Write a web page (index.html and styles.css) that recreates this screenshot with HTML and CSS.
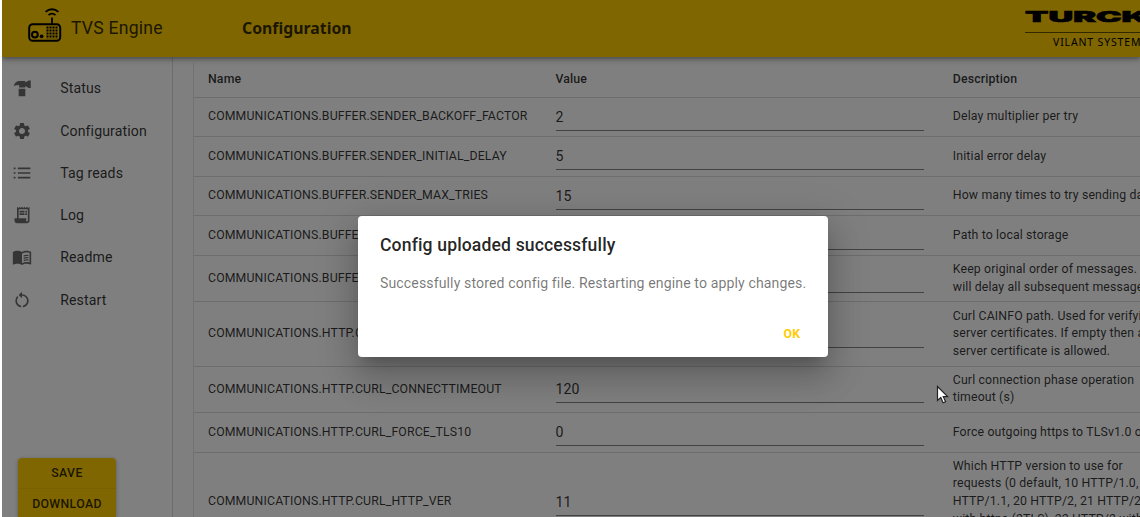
FILE: index.html
```html
<!DOCTYPE html>
<html lang="en">
<head>
<meta charset="utf-8">
<title>TVS Engine</title>
<link rel="stylesheet" href="styles.css">
</head>
<body>
<div class="app">
  <header class="appbar">
    <svg class="logo" width="34" height="34" viewBox="0 0 34 34" fill="none" stroke="#000" stroke-width="2">
      <rect x="1.2" y="16.2" width="31" height="16.600" rx="3.500"/>
      <path d="M24 16V9.500" stroke-width="1.800"/>
      <path d="M20.500 7.200a5 5 0 0 1 7 0" stroke-width="1.800"/>
      <path d="M17.600 3.800a9.300 9.300 0 0 1 12.800 0" stroke-width="1.800"/>
      <circle cx="6.900" cy="26.600" r="2.900"/>
      <circle cx="13.600" cy="28.300" r="1.900" fill="#000" stroke="none"/>
      <path d="M19.500 18.500v12.200M22.500 18.500v12.200M25.500 18.500v12.200M28.500 18.500v12.200" stroke-width="2" stroke-dasharray="2.100 .9"/>
    </svg>
    <span class="brand">TVS Engine</span>
    <h1 class="page-title">Configuration</h1>
    <div class="vendor">
      <div class="vendor-name"><span>TURCK</span></div>
      <div class="vendor-unit">VILANT SYSTEMS</div>
    </div>
  </header>
  <div class="body">
    <aside class="sidebar">
      <nav class="menu">
        <a class="item"><svg class="icon" viewBox="0 0 24 24"><path d="M2 9.500C3 5.500 6 3.500 9 3.500h7v2l4-2.500h2.500v9H20l-4-2.500v2H8.500V8.500C6 8.500 4 9 2 9.500zM8 13h8v9H8z"/></svg>Status</a>
        <a class="item"><svg class="icon" viewBox="0 0 24 24"><path d="M19.140 12.940c.04-.3.060-.61.060-.94 0-.32-.020-.64-.070-.94l2.030-1.580a.49.49 0 0 0 .12-.61l-1.920-3.320a.488.488 0 0 0-.59-.22l-2.390.96c-.5-.38-1.030-.7-1.620-.94l-.36-2.540a.484.484 0 0 0-.48-.41h-3.840c-.24 0-.43.17-.47.41l-.36 2.540c-.59.24-1.130.57-1.620.94l-2.390-.96c-.22-.08-.47 0-.59.22L2.740 8.870c-.12.21-.08.47.12.61l2.030 1.580c-.05.3-.09.63-.09.94s.02.64.07.94l-2.030 1.580a.49.49 0 0 0-.12.61l1.920 3.320c.12.22.37.29.59.22l2.390-.96c.5.38 1.030.7 1.620.94l.36 2.540c.05.24.24.41.48.41h3.840c.24 0 .44-.17.47-.41l.36-2.540c.59-.24 1.130-.56 1.620-.94l2.390.96c.22.08.47 0 .59-.22l1.920-3.320c.12-.22.070-.47-.12-.61l-2.010-1.580zM12 15.600A3.610 3.610 0 0 1 8.400 12c0-1.980 1.620-3.600 3.600-3.600s3.600 1.620 3.600 3.600-1.620 3.600-3.600 3.600z"/></svg>Configuration</a>
        <a class="item"><svg class="icon" viewBox="0 0 24 24"><path d="M2 5.500h2.200v2H2zm5 0h15v2H7zM2 11h2.200v2H2zm5 0h15v2H7zM2 16.500h2.200v2H2zm5 0h15v2H7z"/></svg>Tag reads</a>
        <a class="item"><svg class="icon" viewBox="0 0 24 24"><path d="M19.500 3.500L18 2l-1.500 1.500L15 2l-1.500 1.500L12 2l-1.500 1.500L9 2 7.500 3.500 6 2v14H3v3c0 1.660 1.340 3 3 3h12c1.660 0 3-1.340 3-3V2l-1.500 1.500zM19 19c0 .55-.45 1-1 1s-1-.45-1-1v-3H8V5h11v14zM9 7h6v2H9zm7 0h2v2h-2zm-7 3h6v2H9zm7 0h2v2h-2z"/></svg>Log</a>
        <a class="item"><svg class="icon" viewBox="0 0 24 24"><path d="M21 5c-1.110-.35-2.330-.5-3.500-.5-1.950 0-4.050.4-5.500 1.500-1.450-1.100-3.550-1.500-5.500-1.500S2.450 4.900 1 6v14.650c0 .25.250.5.500.5.100 0 .150-.050.250-.050C3.100 20.450 5.050 20 6.500 20c1.950 0 4.050.4 5.500 1.500 1.350-.85 3.800-1.500 5.500-1.500 1.650 0 3.350.3 4.750 1.050.1.050.15.050.25.050.25 0 .5-.25.5-.5V6c-.6-.45-1.250-.75-2-1zm0 13.500c-1.100-.35-2.300-.5-3.500-.5-1.700 0-4.150.65-5.500 1.500V8c1.350-.85 3.800-1.500 5.500-1.500 1.200 0 2.400.15 3.500.5v11.500zM14 10c2-.8 3.700-.9 5.800-.5v1.500c-2-.4-4-.2-5.800.6zm0 2.700c2-.8 3.700-.9 5.800-.5v1.500c-2-.4-4-.2-5.800.6zm0 2.700c2-.8 3.700-.9 5.800-.5v1.500c-2-.4-4-.2-5.800.6z"/></svg>Readme</a>
        <a class="item"><svg class="icon" viewBox="0 0 24 24"><path d="M12 5V2L8 6l4 4V7c3.310 0 6 2.690 6 6 0 2.970-2.170 5.430-5 5.910v2.020c3.950-.49 7-3.850 7-7.930 0-4.420-3.580-8-8-8zM6 13c0-1.650.67-3.150 1.760-4.240L6.340 7.340A8.014 8.014 0 0 0 4 13c0 4.080 3.050 7.440 7 7.930v-2.020c-2.830-.48-5-2.940-5-5.910z"/></svg>Restart</a>
      </nav>
      <div class="actions">
        <button class="action">SAVE</button>
        <button class="action">DOWNLOAD</button>
      </div>
    </aside>
    <main class="content">
      <div class="table">
        <div class="row head"><span>Name</span><span>Value</span><span>Description</span></div>
        <div class="row"><span>COMMUNICATIONS.BUFFER.SENDER_BACKOFF_FACTOR</span><span class="field">2</span><span>Delay multiplier per try</span></div>
        <div class="row"><span>COMMUNICATIONS.BUFFER.SENDER_INITIAL_DELAY</span><span class="field">5</span><span>Initial error delay</span></div>
        <div class="row"><span>COMMUNICATIONS.BUFFER.SENDER_MAX_TRIES</span><span class="field">15</span><span>How many times to try sending data</span></div>
        <div class="row"><span>COMMUNICATIONS.BUFFE</span><span class="field"></span><span>Path to local storage</span></div>
        <div class="row two"><span>COMMUNICATIONS.BUFFE</span><span class="field"></span><span>Keep original order of messages. This<br>will delay all subsequent messages</span></div>
        <div class="row three"><span>COMMUNICATIONS.HTTP.C</span><span class="field"></span><span>Curl CAINFO path. Used for verifying<br>server certificates. If empty then any<br>server certificate is allowed.</span></div>
        <div class="row two"><span>COMMUNICATIONS.HTTP.CURL_CONNECTTIMEOUT</span><span class="field">120</span><span>Curl connection phase operation<br>timeout (s)</span></div>
        <div class="row"><span>COMMUNICATIONS.HTTP.CURL_FORCE_TLS10</span><span class="field">0</span><span>Force outgoing https to TLSv1.0 only</span></div>
        <div class="row five"><span>COMMUNICATIONS.HTTP.CURL_HTTP_VER</span><span class="field">11</span><span>Which HTTP version to use for<br>requests (0 default, 10 HTTP/1.0, 11<br>HTTP/1.1, 20 HTTP/2, 21 HTTP/2<br>with https (2TLS), 22 HTTP/2 without<br>upgrade)</span></div>
      </div>
    </main>
  </div>
  <div class="backdrop">
    <section class="dialog">
      <h2 class="dialog-title">Config uploaded successfully</h2>
      <p class="dialog-text">Successfully stored config file. Restarting engine to apply changes.</p>
      <div class="dialog-actions"><button class="ok">OK</button></div>
    </section>
  </div>
  <svg class="cursor" width="14" height="20" viewBox="0 0 14 20"><path d="M1.500 1.500v14l3.300-3 2.300 5.300 2.500-1.100-2.300-5h4.300z" fill="#fff" stroke="#222" stroke-width="1.200"/></svg>
</div>
</body>
</html>
```

FILE: styles.css
```css
* { box-sizing: border-box; }
body {
  margin: 0;
  background: #fff;
  font-family: Roboto, "Liberation Sans", sans-serif;
  color: rgba(0, 0, 0, .8);
}
.app {
  position: relative;
  height: 517px;
  margin-left: 2px;
  overflow: hidden;
  display: flex;
  flex-direction: column;
}
.appbar {
  position: relative;
  z-index: 1;
  flex: none;
  height: 57px;
  display: flex;
  align-items: center;
  padding-left: 26px;
  background: #fc0;
  box-shadow: 0 2px 4px rgba(0, 0, 0, .3), 0 3px 8px rgba(0, 0, 0, .14);
}
.logo { flex: none; margin-top: -7px; }
.brand {
  width: 171px;
  margin-top: -1px;
  padding-left: 9px;
  font-size: 17.6px;
  letter-spacing: .22px;
}
.page-title {
  flex: 1;
  margin: -1px 0 0 9px;
  font: 700 15.8px "Noto Sans", sans-serif;
  letter-spacing: .02px;
}
.vendor {
  width: 115px;
  height: 57px;
  padding-top: 9px;
  overflow: hidden;
  white-space: nowrap;
  color: #000;
}
.vendor-name {
  height: 24px;
  border-bottom: 1px solid rgba(0, 0, 0, .6);
  font: 900 15px/16px Inter, sans-serif;
}
.vendor-name span {
  display: inline-block;
  transform: scaleX(2.28);
  transform-origin: 0 0;
  -webkit-text-stroke: .6px #000;
}
.vendor-unit {
  padding: 2px 0 0 28px;
  font: 10.500px/14px "Noto Sans", sans-serif;
  letter-spacing: .85px;
}
.body { flex: 1; display: flex; min-height: 0; }
.sidebar {
  width: 171px;
  flex: none;
  display: flex;
  flex-direction: column;
  justify-content: space-between;
  border-right: 1px solid rgba(0, 0, 0, .14);
}
.menu { padding-top: 10.300px; }
.item {
  display: flex;
  align-items: center;
  gap: 28.400px;
  height: 42.250px;
  padding-left: 9.800px;
  font-size: 14.100px;
  letter-spacing: .13px;
}
.icon { width: 20px; height: 20px; fill: rgba(0, 0, 0, .58); }
.actions {
  width: 98px;
  height: 59px;
  margin-left: 16px;
  border-radius: 4px 4px 0 0;
  overflow: hidden;
  box-shadow: 0 1px 4px rgba(0, 0, 0, .3);
}
.action {
  display: block;
  width: 100%;
  height: 31px;
  border: 0;
  border-bottom: 1px solid #f2c200;
  padding: 0;
  background: #fc0;
  color: rgba(0, 0, 0, .8);
  font: 500 12.300px Roboto, sans-serif;
  letter-spacing: .35px;
}
.content { flex: 1; min-width: 0; padding: 6px 0 0 20px; overflow: hidden; }
.table { width: 1050px; border-left: 1px solid rgba(0, 0, 0, .1); }
.row {
  display: grid;
  grid-template-columns: 347.500px 368.500px 300px;
  align-items: center;
  height: 39.600px;
  padding-left: 14px;
  border-bottom: 1px solid rgba(0, 0, 0, .14);
  font-size: 12.300px;
  line-height: 17.600px;
  letter-spacing: .14px;
}
.row > :last-child { padding-left: 28.800px; white-space: nowrap; }
.head { height: 34.500px; padding-top: 1px; font-weight: 500; }
.two { height: 46.500px; }
.three { height: 64.200px; }
.five { height: 99.200px; }
.field {
  height: 28px;
  border-bottom: 1px solid rgba(0, 0, 0, .48);
  font-size: 14.100px;
  line-height: 28px;
}
.backdrop {
  position: absolute;
  z-index: 2;
  inset: 0;
  padding: 216px 0 0 356px;
  background: rgba(0, 0, 0, .5);
}
.dialog {
  width: 470px;
  height: 141px;
  padding: 0 22px;
  border-radius: 4px;
  background: #fff;
  color: rgba(0, 0, 0, .87);
  box-shadow: 0 10px 13px -6px rgba(0, 0, 0, .2), 0 21px 33px 3px rgba(0, 0, 0, .14), 0 8px 40px 7px rgba(0, 0, 0, .12);
}
.dialog-title {
  margin: 0;
  padding-top: 14.500px;
  font: 500 17.600px/28px Roboto, sans-serif;
  letter-spacing: .13px;
}
.dialog-text {
  margin: 0;
  padding-top: 13px;
  color: rgba(0, 0, 0, .54);
  font-size: 14.100px;
  line-height: 22px;
  letter-spacing: .11px;
  white-space: nowrap;
}
.dialog-actions { display: flex; justify-content: flex-end; padding: 29px 5.500px 0 0; }
.ok {
  border: 0;
  padding: 0;
  background: none;
  color: #fc0;
  font: 700 12.300px/22px Roboto, sans-serif;
  letter-spacing: .35px;
}
.cursor { position: absolute; z-index: 3; left: 934px; top: 385px; }
```
